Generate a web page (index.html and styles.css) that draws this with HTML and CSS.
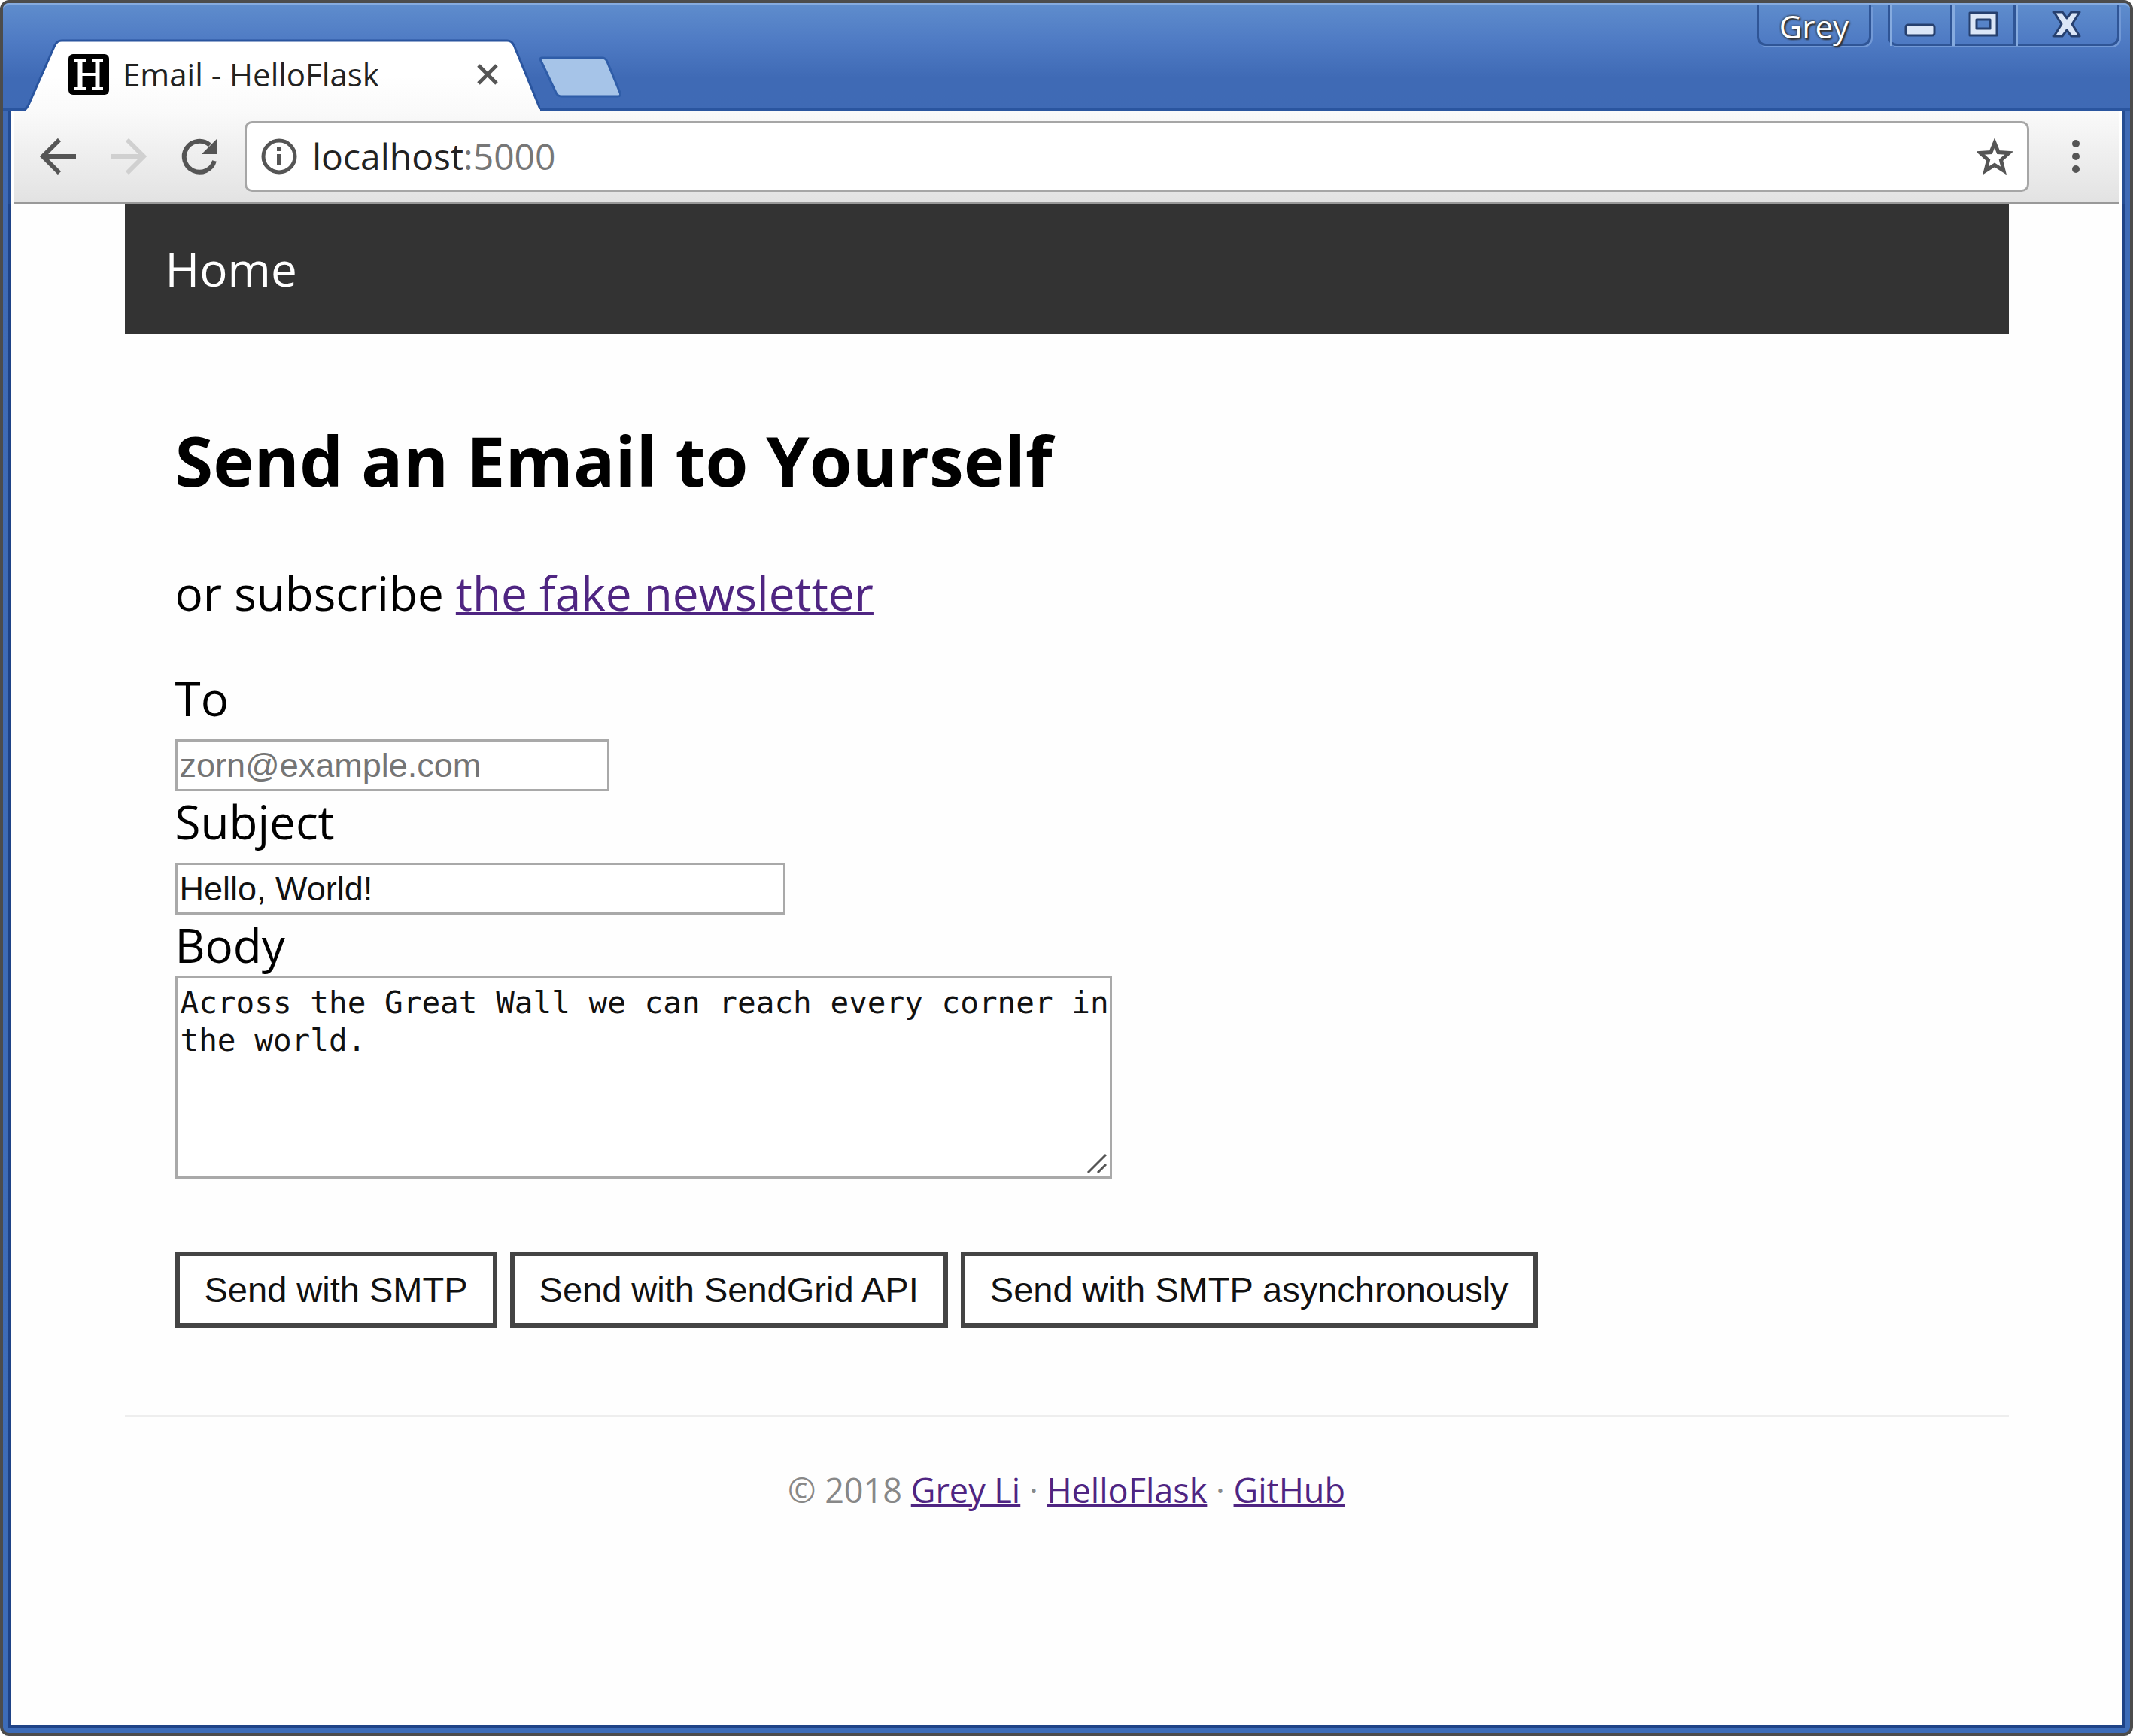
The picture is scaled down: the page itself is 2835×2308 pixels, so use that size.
FILE: index.html
```html
<!DOCTYPE html>
<html lang="en">
<head>
<meta charset="utf-8">
<title>Email - HelloFlask</title>
<link rel="stylesheet" href="styles.css">
</head>
<body>
<div class="window">
  <header class="titlebar">
    <div class="tab">
      <svg class="tab-shape" viewBox="0 0 704 96" aria-hidden="true">
        <defs><linearGradient id="tabfill" x1="0" y1="0" x2="0" y2="1"><stop offset="0" stop-color="#fff"/><stop offset=".5" stop-color="#fff"/><stop offset="1" stop-color="#fafafa"/></linearGradient></defs>
        <path d="M20 96 C23 94 24 91 26 86 L60 9 Q63 3 69 3 H659 Q665 3 668 9 L702 90 Q703 94 706 96Z" fill="url(#tabfill)"/>
        <path d="M0 94 H17 C21 94 23 91 25 86 L59 9 Q62 3 68 3 H660 Q666 3 669 9 L704 94" fill="none" stroke="#2a559f" stroke-width="3"/>
      </svg>
      <svg class="favicon" viewBox="0 0 54 54" aria-hidden="true">
        <rect width="54" height="54" rx="6" fill="#000"/>
        <path d="M8 9H23M31 9H46M8 46H23M31 46H46" stroke="#fff" stroke-width="4"/>
        <path d="M15.500 9V46M38.500 9V46" stroke="#fff" stroke-width="6"/>
        <path d="M15 27H39" stroke="#fff" stroke-width="4"/>
      </svg>
      <span class="tab-title">Email - HelloFlask</span>
      <button class="icon-button tab-close" aria-label="Close tab">
        <svg viewBox="0 0 28 28" width="28" height="28"><path d="M2 2 26 26M26 2 2 26" stroke="#555" stroke-width="5"/></svg>
      </button>
    </div>
    <button class="icon-button new-tab" aria-label="New tab">
      <svg viewBox="0 0 112 56" width="112" height="56"><path d="M4 2H84Q89 2 91 7L108 48Q110 53 105 53H30Q25 53 23 48L3 6Q1 2 4 2Z" fill="#a6c4e8" stroke="#2f5da8" stroke-width="3"/></svg>
    </button>
    <div class="controls">
      <button class="caption profile">Grey</button>
      <div class="caption-group">
        <button class="caption minimize" aria-label="Minimize">
          <svg viewBox="0 0 42 36" width="42" height="36"><rect x="2" y="19" width="38" height="14" rx="3" fill="#dbe6f7" stroke="#26406f" stroke-width="3"/></svg>
        </button>
        <button class="caption maximize" aria-label="Maximize">
          <svg viewBox="0 0 42 36" width="42" height="36"><path fill-rule="evenodd" d="M3 3H39V33H3ZM12 12V24H30V12Z" fill="#dbe6f7" stroke="#26406f" stroke-width="3" stroke-linejoin="round"/></svg>
        </button>
        <button class="caption close" aria-label="Close">
          <svg viewBox="0 0 42 36" width="42" height="36"><path d="M4 2H15L21 10 27 2H38L28 18 38 34H27L21 26 15 34H4L14 18Z" fill="#dbe6f7" stroke="#26406f" stroke-width="3" stroke-linejoin="round"/></svg>
        </button>
      </div>
    </div>
  </header>

  <div class="toolbar">
    <button class="icon-button" aria-label="Back">
      <svg viewBox="0 0 48 48" width="48" height="48"><path d="M48 24H5M26 2 4 24 26 46" fill="none" stroke="#555" stroke-width="6"/></svg>
    </button>
    <button class="icon-button" aria-label="Forward" disabled>
      <svg viewBox="0 0 48 48" width="48" height="48"><path d="M0 24H43M22 2 44 24 22 46" fill="none" stroke="#d0d0d0" stroke-width="6"/></svg>
    </button>
    <button class="icon-button" aria-label="Reload">
      <svg viewBox="0 0 48 48" width="48" height="48"><path d="M44 30A20.500 20.500 0 1 1 38 9" fill="none" stroke="#555" stroke-width="6"/><path d="M48 0V21H27Z" fill="#555"/></svg>
    </button>
    <div class="omnibox">
      <svg viewBox="0 0 48 48" width="48" height="48" aria-hidden="true"><circle cx="24" cy="24" r="21" fill="none" stroke="#555" stroke-width="5"/><path d="M24 21V36M24 12V17" stroke="#555" stroke-width="6"/></svg>
      <div class="url" role="textbox" aria-label="Address" tabindex="0">localhost<span class="port">:5000</span></div>
      <button class="icon-button" aria-label="Bookmark this page">
        <svg viewBox="0 0 48 48" width="48" height="48"><path d="M24 6 29 18.500 43 19.500 32.500 29 36 43 24 35.500 12 43 15.500 29 5 19.500 19 18.500Z" fill="none" stroke="#555" stroke-width="5"/></svg>
      </button>
    </div>
    <button class="icon-button menu" aria-label="Menu">
      <svg viewBox="0 0 12 48" width="12" height="48"><g fill="#555"><circle cx="6" cy="7" r="5"/><circle cx="6" cy="24" r="5"/><circle cx="6" cy="41" r="5"/></g></svg>
    </button>
  </div>

  <div class="viewport">
    <div class="page">
      <nav class="nav"><a href="#">Home</a></nav>
      <main class="content">
        <h1>Send an Email to Yourself</h1>
        <p class="lead">or subscribe <a href="#">the fake newsletter</a></p>
        <form class="form">
          <div class="field">
            <label for="to">To</label>
            <input id="to" class="short" type="email" placeholder="zorn@example.com">
          </div>
          <div class="field">
            <label for="subject">Subject</label>
            <input id="subject" class="medium" type="text" value="Hello, World!">
          </div>
          <div class="field field-body">
            <label for="body">Body</label>
            <div class="textarea-wrap">
              <textarea id="body">Across the Great Wall we can reach every corner in the world.</textarea>
              <svg class="grip" viewBox="0 0 28 28" aria-hidden="true"><path d="M2 26 26 2M15 26 26 15" stroke="#555" stroke-width="3"/></svg>
            </div>
          </div>
          <div class="actions">
            <button type="button">Send with SMTP</button>
            <button type="button">Send with SendGrid API</button>
            <button type="button">Send with SMTP asynchronously</button>
          </div>
        </form>
      </main>
      <footer class="footer">© 2018 <a href="#">Grey Li</a> · <a href="#">HelloFlask</a> · <a href="#">GitHub</a></footer>
    </div>
  </div>
</div>
</body>
</html>
```
FILE: styles.css
```css
* {
  box-sizing: border-box;
}

body {
  margin: 0;
  background: #fff;
  color: #000;
  font-family: "Open Sans", "Noto Sans", sans-serif;
}

button {
  font-family: inherit;
}

svg {
  display: block;
}

.window {
  display: flex;
  flex-direction: column;
  min-height: 100vh;
  padding: 0 10px 10px;
  border: 4px solid #4c4c4c;
  border-radius: 12px;
  background: linear-gradient(#5f8dcd 0, #4f7bc4 50px, #3f6ab5 100px, #3d6cb8 100%);
}

/* Title bar */

.titlebar {
  display: flex;
  align-items: flex-start;
  height: 143px;
  margin: 0 -10px;
  padding: 0 14px 0 10px;
  border-top: 3px solid #86abdf;
  border-radius: 8px 8px 0 0;
  box-shadow: inset 0 -4px 0 #2a559f;
}

.tab {
  position: relative;
  display: flex;
  align-items: center;
  width: 708px;
  height: 96px;
  margin-top: 44px;
  padding: 0 60px 0 77px;
}

.tab-shape {
  position: absolute;
  inset: 0;
  width: 704px;
  height: 96px;
}

.favicon {
  position: relative;
  width: 54px;
  height: 54px;
}

.tab-title {
  position: relative;
  flex: 1;
  margin-left: 18px;
  color: #222;
  font-size: 42px;
  line-height: 56px;
  white-space: nowrap;
}

.icon-button {
  flex: none;
  padding: 0;
  border: 0;
  background: none;
}

.tab-close {
  position: relative;
}

.new-tab {
  margin: 68px 0 0 -6px;
}

.controls {
  display: flex;
  gap: 22px;
  margin-left: auto;
}

.caption {
  display: flex;
  justify-content: center;
  height: 54px;
  padding: 7px 0 0;
  border: 0;
  border-left: 3px solid #2f5596;
  background: none;
  box-shadow: inset 3px 0 0 #86abdf;
}

.profile,
.caption-group {
  border: 3px solid #2f5596;
  border-top: 0;
  border-radius: 0 0 12px 12px;
  box-shadow: 2px 2px 0 #7299d6;
}

.profile {
  width: 152px;
  padding: 0;
  color: #fff;
  font-size: 42px;
  line-height: 56px;
  text-shadow: 0 0 3px #333, 0 0 3px #333, 2px 2px 2px #333;
}

.caption-group {
  display: flex;
  height: 54px;
}

.caption-group .caption:first-child {
  border-left: 0;
}

.minimize {
  width: 80px;
}

.maximize {
  width: 84px;
}

.close {
  width: 138px;
}

/* Toolbar */

.toolbar {
  display: flex;
  align-items: center;
  gap: 46px;
  height: 124px;
  padding: 0 52px 3px 35px;
  border: solid #fff;
  border-width: 0 4px;
  background: linear-gradient(#fafafa, #e2e2e2);
  box-shadow: -4px 0 0 #244c92, 4px 0 0 #244c92, inset 0 -3px 0 #999;
}

.omnibox {
  display: flex;
  flex: 1;
  align-items: center;
  height: 94px;
  margin-left: -10px;
  padding: 0 19px;
  border: 3px solid #a6a6a6;
  border-radius: 10px;
  background: #fff;
}

.url {
  flex: 1;
  margin-left: 20px;
  color: #222;
  font-size: 48px;
  line-height: 64px;
}

.port {
  color: #777;
}

.menu {
  margin-left: 10px;
}

/* Page */

.viewport {
  flex: 1;
  background: #fefefe;
  box-shadow: 0 0 0 4px #1f4387;
  clip-path: inset(0 -4px -4px -4px);
}

.page {
  max-width: 2504px;
  margin: 0 auto;
}

.nav {
  padding: 43px 54px 44px;
  background: #333;
  font-size: 62px;
  line-height: 86px;
}

.nav a {
  color: #fff;
  text-decoration: none;
}

.content {
  padding: 103px 67px 116px;
  border-bottom: 3px solid #eee;
}

h1 {
  margin: 0 0 71px;
  font-size: 92px;
  line-height: 130px;
}

.lead {
  margin: 0 0 60px;
  font-size: 62px;
  line-height: 80px;
}

a {
  color: #4f2582;
  text-decoration-thickness: 4px;
}

.field {
  display: flex;
  flex-direction: column;
  align-items: flex-start;
  gap: 15px;
}

.field-body {
  gap: 1px;
}

label {
  font-size: 62px;
  line-height: 80px;
}

input,
textarea {
  display: block;
  margin: 0;
  border: 3px solid #a9a9a9;
  border-radius: 0;
  outline: 0;
  background: #fff;
  color: #111;
}

input {
  height: 69px;
  padding: 0 3px;
  font-family: "Liberation Sans", Arial, sans-serif;
  font-size: 45px;
}

input::placeholder {
  color: #757575;
}

.short {
  width: 577px;
}

.medium {
  width: 811px;
}

.textarea-wrap {
  position: relative;
}

textarea {
  width: 1245px;
  height: 270px;
  padding: 8px 0 0 4px;
  overflow: hidden;
  font-family: "DejaVu Sans Mono", monospace;
  font-size: 41px;
  line-height: 50px;
  resize: none;
}

.grip {
  position: absolute;
  right: 6px;
  bottom: 6px;
  width: 28px;
  height: 28px;
}

.actions {
  display: flex;
  gap: 17px;
  margin-top: 97px;
}

.actions button {
  height: 101px;
  padding: 0 33px;
  border: 6px solid #444;
  background: #fff;
  color: #111;
  font-family: "Liberation Sans", Arial, sans-serif;
  font-size: 47px;
}

.footer {
  padding: 65px 0;
  color: #888;
  font-size: 45px;
  line-height: 64px;
  text-align: center;
}

.footer a {
  text-decoration-thickness: 3px;
}
```
